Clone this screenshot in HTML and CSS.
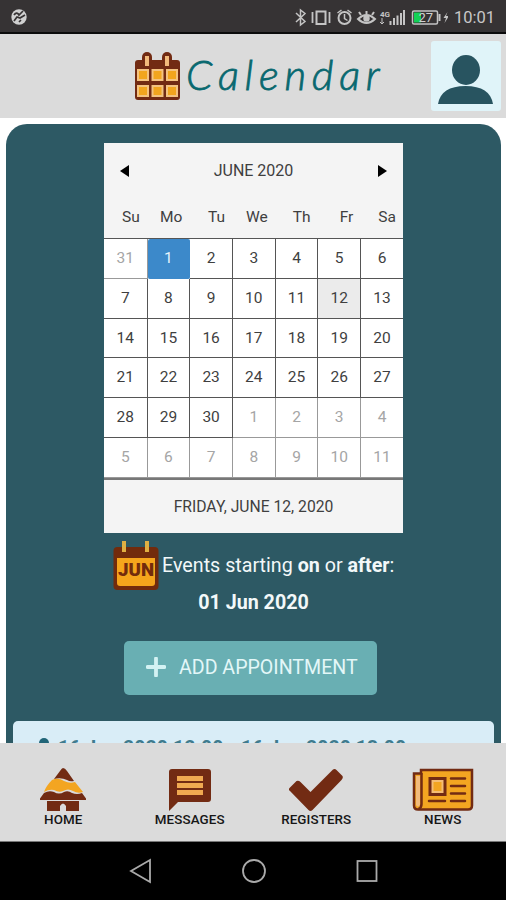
FILE: index.html
```
<!DOCTYPE html>
<html lang="en">
<head>
    <meta charset="UTF-8">
    <meta name="viewport" content="width=device-width, initial-scale=1.0">
    <title>Calendar</title>
    <link rel="stylesheet" href="styles.css">
</head>
<body>
    <div class="status-bar">
        <svg class="status-left" width="18" height="18" viewBox="0 0 18 18">
            <circle cx="9" cy="9" r="7.7" fill="#d0d0d0"/>
            <path d="M4 7c2-3 4-2 5 0l4-4M4 13l3-4 3 1 5-3M9 14l2-2" fill="none" stroke="#363334" stroke-width="1.7"/>
        </svg>
        <svg class="status-icons" width="154" height="22" viewBox="294 6 154 22" fill="none" stroke="#c4c4c4" stroke-width="1.5">
            <path d="M296 13l9 8.5-4.5 3.500V10l4.500 3.500-9 8.500"/>
            <rect x="316.500" y="11.500" width="9" height="12.500" stroke-width="2"/>
            <path d="M312.500 12v11M329.500 12v11" stroke-width="1.800"/>
            <circle cx="344.500" cy="18" r="6" stroke-width="2"/>
            <path d="M344.500 14v4.500l3 2M337.500 13l4-3M347.500 10l4 3"/>
            <path d="M358 19q8.500-8 17 0-8.500 8-17 0zM366.500 14v-3M361 15l-2-3M372 15l2-3" stroke-width="2"/>
            <circle cx="366.500" cy="18.500" r="2.500" fill="#c4c4c4"/>
            <text class="network" x="380" y="17">4G</text>
            <path d="M382 18v6M380 22l2 2 2-2" stroke-width="1"/>
            <path d="M390.500 25v-4M394 25v-7M397.500 25V15.500M401 25V13M404 25V10" stroke-width="2"/>
            <rect x="412.500" y="11" width="25" height="13" rx="1.500"/>
            <path d="M439.500 14v7" stroke-width="2"/>
            <rect x="414" y="12.500" width="7" height="10" fill="#13d155" stroke="none"/>
            <text class="battery" x="418.500" y="22">27</text>
            <path d="M447.500 12l-4 6h2.500l-1.500 5 4.500-7h-3z" fill="#c4c4c4" stroke="none"/>
        </svg>
        <span class="clock">10:01</span>
    </div>

    <header class="header">
        <svg class="header-icon" width="48" height="50" viewBox="0 0 48 50">
            <rect x="1" y="8" width="45" height="40" rx="3" fill="#722b13"/>
            <rect x="8" y="0" width="10" height="17" rx="5" fill="#722b13"/>
            <rect x="28" y="0" width="10" height="17" rx="5" fill="#722b13"/>
            <path d="M11 4h4v10h-4zM31 4h4v10h-4z" fill="#f2bb7c"/>
            <path d="M3 17h12v12H3zM17.500 17h12v12h-12zM32 17h12v12H32zM3 33h12v12H3zM17.500 33h12v12h-12zM32 33h12v12H32z" fill="#f4c380"/>
            <path d="M5 19h8v8H5zM19.500 19h8v8h-8zM34 19h8v8h-8zM5 35h8v8H5zM19.500 35h8v8h-8zM34 35h8v8h-8z" fill="#f2a51e"/>
        </svg>
        <h1 class="title">Calendar</h1>
        <div class="avatar">
            <svg width="56" height="52" viewBox="0 0 56 52" fill="#285460">
                <ellipse cx="28" cy="17" rx="14" ry="15"/>
                <path d="M0 51q3-18 27.500-18T55 51z"/>
            </svg>
        </div>
    </header>

    <main class="content">
        <div class="panel">
            <section class="calendar">
                <div class="month-bar">
                    <svg width="9" height="12" viewBox="0 0 9 12"><path d="M9 0v12L0 6z"/></svg>
                    <span>JUNE 2020</span>
                    <svg width="9" height="12" viewBox="0 0 9 12"><path d="M0 0v12l9-6z"/></svg>
                </div>
                <div class="weekdays">
                    <span>Su</span><span>Mo</span><span>Tu</span><span>We</span><span>Th</span><span>Fr</span><span>Sa</span>
                </div>
                <div class="days">
                    <span class="day other">31</span><span class="day selected">1</span><span class="day">2</span><span class="day">3</span><span class="day">4</span><span class="day">5</span><span class="day">6</span>
                    <span class="day">7</span><span class="day">8</span><span class="day">9</span><span class="day">10</span><span class="day">11</span><span class="day today">12</span><span class="day">13</span>
                    <span class="day">14</span><span class="day">15</span><span class="day">16</span><span class="day">17</span><span class="day">18</span><span class="day">19</span><span class="day">20</span>
                    <span class="day">21</span><span class="day">22</span><span class="day">23</span><span class="day">24</span><span class="day">25</span><span class="day">26</span><span class="day">27</span>
                    <span class="day">28</span><span class="day">29</span><span class="day">30</span><span class="day other">1</span><span class="day other">2</span><span class="day other">3</span><span class="day other">4</span>
                    <span class="day other">5</span><span class="day other">6</span><span class="day other">7</span><span class="day other">8</span><span class="day other">9</span><span class="day other">10</span><span class="day other">11</span>
                </div>
                <div class="calendar-footer">FRIDAY, JUNE 12, 2020</div>
            </section>

            <div class="events">
                <svg width="46" height="51" viewBox="0 0 46 51">
                    <rect x="0.500" y="7" width="45" height="43" rx="4" fill="#722b0c"/>
                    <path d="M4 18h38v25q0 3-3 3H7q-3 0-3-3z" fill="#f5a51c"/>
                    <path d="M9 1h4v11H9zM32 1h4v11h-4z" fill="#e0b043"/>
                    <text class="icon-month" x="23" y="36" text-anchor="middle" textLength="36" lengthAdjust="spacingAndGlyphs">JUN</text>
                </svg>
                <p class="events-text">Events starting <b>on</b> or <b>after</b>:</p>
            </div>
            <p class="events-date">01 Jun 2020</p>

            <button class="add-button">
                <svg width="20" height="20" viewBox="0 0 20 20"><path d="M10 1.500v17M1.500 10h17" stroke="#d3f2f3" stroke-width="3.800" stroke-linecap="round"/></svg>
                <span>ADD APPOINTMENT</span>
            </button>

            <article class="event-card">
                <svg width="14" height="16" viewBox="0 0 14 16" fill="#216578"><circle cx="7" cy="5" r="5"/><path d="M0 16q0-6 7-6t7 6z"/></svg>
                <span>16 Jun 2020 12:00 - 16 Jun 2020 13:00</span>
            </article>
        </div>
    </main>

    <nav class="tabs">
        <a class="tab">
            <svg width="48" height="44" viewBox="0 0 48 44">
                <path d="M24 0q2 0 4 3l7 10q-4 1-7-1-6-3-13-1l6-8q2-3 3-3z" fill="#722b13"/>
                <path d="M13 12q6-3 12 1 6 3 11 1l8 10q-5 2-10-1-5-3-10 0-4 2-9-1-5-1-10 2 2-6 8-12z" fill="#f3a521"/>
                <path d="M5 25q5-3 10-1 5 3 10 0 4-2 8 1 5 2 10 0l4 5.500V32H1v-1.500z" fill="#722b13"/>
                <path d="M8 33h32v10H27v-5q-3-5-6 0v5H8z" fill="#722b13"/>
            </svg>
            <span>HOME</span>
        </a>
        <a class="tab">
            <svg width="44" height="44" viewBox="0 0 44 44">
                <path d="M4 1h36q3 0 3 3v27q0 3-3 3H10l-9 9V4q0-3 3-3z" fill="#722b13"/>
                <path d="M9 8h26v5H9zM9 15h26v5H9zM9 22h26v5H9z" fill="#f0aa51"/>
            </svg>
            <span>MESSAGES</span>
        </a>
        <a class="tab">
            <svg width="54" height="44" viewBox="0 0 54 44"><path d="M0.500 20l7-7q2-1 4 1l10 10L44 1.500q2-1 3.500.5l6 6q1 2-1 4l-29 30q-2 2-4 0L1 23q-2-1-.5-3z" fill="#722b13"/></svg>
            <span>REGISTERS</span>
        </a>
        <a class="tab">
            <svg width="62" height="44" viewBox="0 0 62 44">
                <path d="M9 5.500H2v32q0 4 4 4h50q4 0 4-4V2H9z" fill="#f3a521" stroke="#722b13" stroke-width="2.500"/>
                <path d="M4 8h4v29q-2 3-4 0z" fill="#f2bb7c"/>
                <path d="M9.500 5v31q0 4-3 5" fill="none" stroke="#722b13" stroke-width="2.500"/>
                <rect x="18" y="10.500" width="15" height="16" fill="#f5bd74" stroke="#722b13" stroke-width="3"/>
                <rect x="21.500" y="14" width="8" height="9" fill="#f3a521"/>
                <path d="M39 10.500h14M39 18h14M39 25.500h14M39 33h14M17 33h16" stroke="#722b13" stroke-width="2.500" stroke-linecap="round"/>
            </svg>
            <span>NEWS</span>
        </a>
    </nav>

    <div class="system-nav">
        <svg width="24" height="26" viewBox="0 0 24 26"><path d="M21 2v22L2 13z"/></svg>
        <svg width="26" height="26" viewBox="0 0 26 26"><circle cx="13" cy="13" r="11"/></svg>
        <svg width="24" height="26" viewBox="0 0 24 26"><rect x="2.500" y="3" width="19" height="20"/></svg>
    </div>
</body>
</html>
```
FILE: styles.css
```
* {
    box-sizing: border-box;
}

body {
    margin: 0;
    height: 900px;
    display: flex;
    flex-direction: column;
    overflow: hidden;
    background: #fff;
    font-family: Roboto, sans-serif;
}

svg {
    display: block;
    flex-shrink: 0;
}

.status-bar {
    height: 34px;
    flex-shrink: 0;
    display: flex;
    align-items: center;
    padding: 0 10px;
    background: #363334;
    border-bottom: 2px solid #0b0b0b;
    color: #c8c8c8;
}

.status-left {
    margin-top: 2px;
}

.status-icons {
    margin-left: 266px;
    margin-top: 1px;
}

.network {
    font-size: 8px;
    font-weight: 700;
    fill: #c4c4c4;
    stroke: none;
}

.battery {
    font-size: 13px;
    fill: #d0d0d0;
    stroke: none;
}

.clock {
    margin-left: 6px;
    margin-top: 3px;
    font-size: 16.5px;
}

.header {
    height: 84px;
    flex-shrink: 0;
    display: flex;
    align-items: flex-start;
    padding: 7px 5px 0 134px;
    background: #dbdbdb;
}

.header-icon {
    margin-top: 11px;
}

.title {
    width: 200px;
    margin: 7px 0 0 4px;
    font-family: Lato, cursive;
    font-size: 42px;
    font-style: italic;
    font-weight: 300;
    line-height: 52px;
    letter-spacing: 5.7px;
    white-space: nowrap;
    color: #08686f;
    -webkit-text-stroke: 0.8px #08686f;
}

.avatar {
    width: 70px;
    height: 70px;
    margin-left: auto;
    padding: 12px 7px 0;
    border-radius: 3px;
    background: #e0f4f9;
}

.content {
    height: 625px;
    flex-shrink: 0;
    padding: 6px 5px 0 6px;
    overflow: hidden;
}

.panel {
    height: 700px;
    padding: 19px 7px 0;
    border-radius: 21px 21px 0 0;
    background: #2d5964;
}

.calendar {
    width: 299px;
    height: 390px;
    margin: 0 0 0 91px;
    background: #f4f4f4;
    color: #3f3f3f;
    font-size: 15.5px;
}

.month-bar {
    height: 55px;
    display: flex;
    align-items: center;
    justify-content: space-between;
    padding: 0 16px;
    font-size: 16px;
}

.weekdays {
    height: 40px;
    display: grid;
    grid-template-columns: repeat(7, 1fr);
    line-height: 39px;
    text-align: right;
    font-size: 15.5px;
}

.weekdays span {
    padding-right: 7px;
}

.days {
    height: 240px;
    display: grid;
    grid-template-columns: 43.6px repeat(5, 42.7px) 1fr;
    grid-template-rows: repeat(6, 1fr);
    border-top: 1px solid #555;
    background: #fff;
}

.day {
    display: flex;
    align-items: center;
    justify-content: center;
    padding-bottom: 1px;
    border-right: 1px solid #555;
    border-bottom: 1px solid #555;
}

.day:nth-child(7n) {
    border-right: none;
}

.other {
    color: #a5a5a5;
    border-color: #999;
}

.selected {
    background: #3c89ca;
    border-color: #3c89ca;
    border-radius: 2px;
    color: #e6f3fb;
}

.today {
    background: #ebebeb;
}

.calendar-footer {
    height: 55px;
    display: flex;
    align-items: center;
    justify-content: center;
    border-top: 2px solid #777;
    font-size: 15.7px;
}

.events {
    display: flex;
    margin: 7px 0 0 100px;
    color: #f2f8f9;
}

.events-text {
    margin: 12px 0 0 3px;
    font-size: 19.7px;
    line-height: 27px;
    white-space: nowrap;
}

.icon-month {
    font-size: 19px;
    font-weight: 900;
    fill: #722b0c;
}

.events-date {
    margin: -1px 0 0;
    text-align: center;
    font-size: 19.7px;
    font-weight: 700;
    line-height: 26px;
    color: #f2f8f9;
}

.add-button {
    width: 253px;
    height: 54px;
    display: flex;
    align-items: center;
    gap: 13px;
    margin: 25px 0 0 111px;
    padding: 0 0 2px 22px;
    border: none;
    border-radius: 5px;
    background: #69afb3;
    color: #e3f7f8;
    font-family: inherit;
    font-size: 19.6px;
    white-space: nowrap;
}

.event-card {
    height: 60px;
    display: flex;
    align-items: flex-start;
    gap: 7px;
    margin-top: 26px;
    padding: 17px 24px;
    border-radius: 5px;
    background: #d9edf7;
    color: #3f7b8e;
    font-size: 19.6px;
    font-weight: 700;
    line-height: 22px;
}

.tabs {
    height: 99px;
    flex-shrink: 0;
    display: grid;
    grid-template-columns: repeat(4, 1fr);
    padding-top: 25px;
    background: #dbdbdb;
    border-bottom: 1px solid #777;
}

.tab {
    display: flex;
    flex-direction: column;
    align-items: center;
    font-size: 13.4px;
    font-weight: 500;
    line-height: 15px;
    letter-spacing: 0.1px;
    color: #161616;
}

.system-nav {
    flex: 1;
    display: flex;
    align-items: center;
    justify-content: center;
    gap: 88px;
    padding-left: 1px;
    background: #000;
}

.system-nav path,
.system-nav circle,
.system-nav rect {
    fill: none;
    stroke: #aaa;
    stroke-width: 1.8;
}
```
